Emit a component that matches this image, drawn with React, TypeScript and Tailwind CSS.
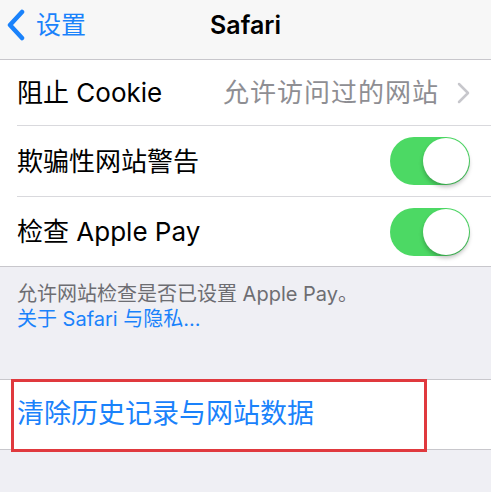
import React from "react";

const font = { fontFamily: 'Inter, "Noto Sans CJK SC", sans-serif' };

function Toggle() {
  return (
    <div className="relative h-[48px] w-[80px] rounded-full bg-[#4cd964]">
      <div className="absolute right-[1px] top-[1px] h-[46px] w-[46px] rounded-full bg-white shadow-[0_3px_4px_rgba(0,0,0,0.25)]" />
    </div>
  );
}

function Row({ children, height, last }: { children: React.ReactNode; height: string; last?: boolean }) {
  return (
    <div className={"flex items-center " + height}>
      <div
        className={
          "ml-[17px] flex h-full flex-1 items-center justify-between pr-[21px] " +
          (last ? "" : "border-b border-[#d9d9dd]")
        }
      >
        {children}
      </div>
    </div>
  );
}

export default function App() {
  return (
    <div className="h-[492px] w-[491px] overflow-hidden bg-[#efeff4] text-black" style={font}>
      <header className="relative flex h-[60px] items-center justify-center border-b border-[#c8c7cc] bg-[#f7f7f7] pb-[9px]">
        <div className="absolute left-[6px] top-0 flex h-full items-center gap-[10px] pb-[9px] text-[#1a82fb]">
          <svg width="20" height="32" viewBox="0 0 20 32" fill="none">
            <path d="M16 3 L4 16 L16 29" stroke="currentColor" strokeWidth="4.5" strokeLinecap="round" strokeLinejoin="round" />
          </svg>
          <span className="text-[25px] leading-none">设置</span>
        </div>
        <h1 className="text-[25px] font-semibold leading-none">Safari</h1>
      </header>

      <section className="border-b border-[#c8c7cc] bg-white">
        <Row height="h-[66px]">
          <span className="text-[26px]">阻止 Cookie</span>
          <div className="flex items-center gap-[18px] text-[#8e8e93]">
            <span className="text-[26px] tracking-[1px]">允许访问过的网站</span>
            <svg width="13" height="22" viewBox="0 0 13 22" fill="none">
              <path d="M2 2 L11 11 L2 20" stroke="#c7c7cc" strokeWidth="2.5" strokeLinecap="round" strokeLinejoin="round" />
            </svg>
          </div>
        </Row>
        <Row height="h-[71px]">
          <span className="text-[26px]">欺骗性网站警告</span>
          <Toggle />
        </Row>
        <Row height="h-[69px]" last>
          <span className="text-[26px]">检查 Apple Pay</span>
          <Toggle />
        </Row>
      </section>

      <div className="px-[17px] pb-[47px] pt-[15px] text-[20px] leading-[25px]">
        <p className="text-[#6d6d72]">允许网站检查是否已设置 Apple Pay。</p>
        <p className="text-[#1a82fb]">关于 Safari 与隐私...</p>
      </div>

      <section className="relative border-y border-[#c8c7cc] bg-white">
        <div className="flex h-[69px] items-center px-[17px]">
          <span className="text-[27px] text-[#1a82fb]">清除历史记录与网站数据</span>
        </div>
        <div className="absolute left-[11px] top-[-1px] h-[73px] w-[416px] border-[3px] border-[#e0393e]" />
      </section>
    </div>
  );
}
